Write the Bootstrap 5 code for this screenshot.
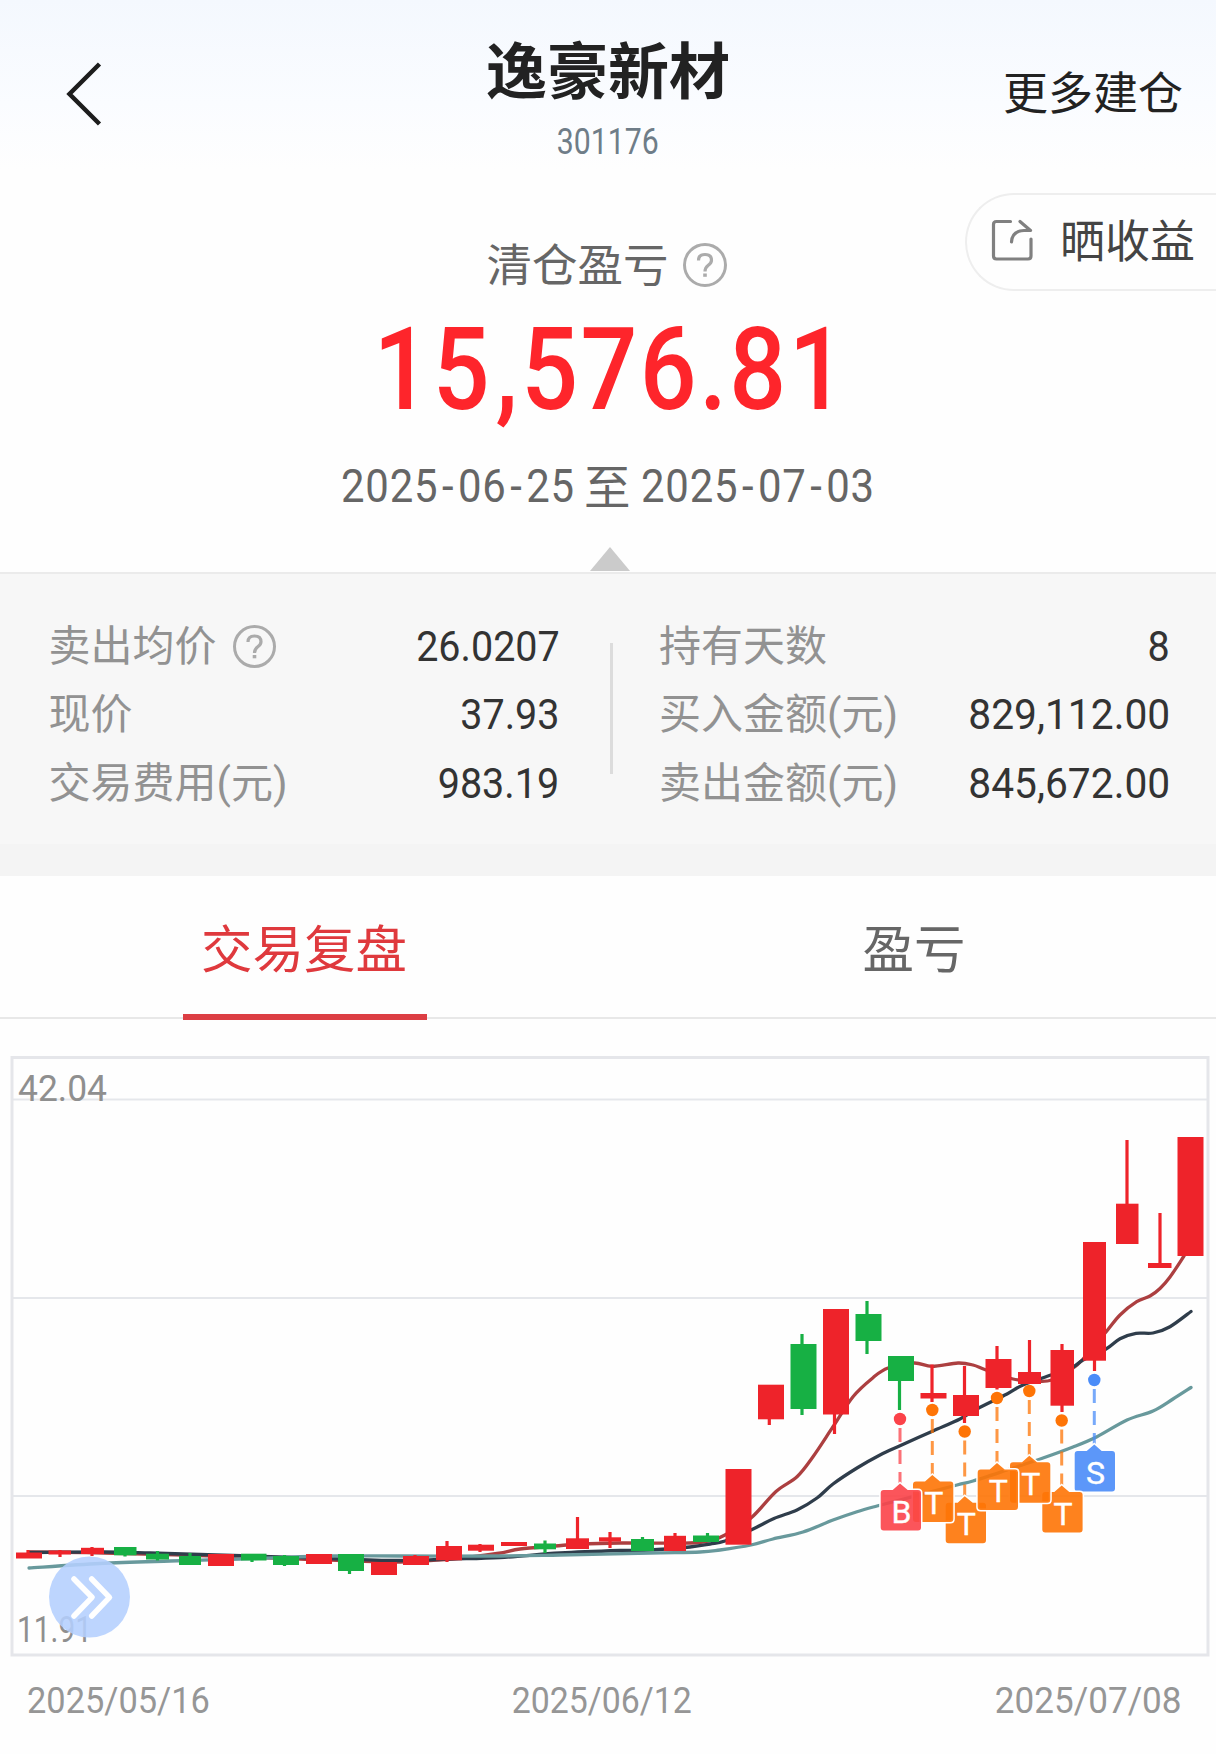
<!DOCTYPE html>
<html lang="zh-CN">
<head>
<meta charset="utf-8">
<meta name="viewport" content="width=device-width, initial-scale=1">
<title>逸豪新材 301176</title>
<link href="https://cdn.jsdelivr.net/npm/bootstrap@5.3.0/dist/css/bootstrap.min.css" rel="stylesheet">
<style>
body{font-family:Roboto,"Noto Sans CJK SC",sans-serif;color:#333;background:#fefefe;overflow-x:hidden}
.topbar{height:188px;background:linear-gradient(#f4f8fe,#fafcff 55%,#fefefe 90%)}
.topbar .back{padding-left:66px}
.stock-name{font-size:61px;line-height:70px;font-weight:700;color:#222;padding-top:37.5px}
.stock-code{font-size:36px;line-height:40px;color:#6f7d88;margin-top:14px}
.more-link{font-size:45px;line-height:60px;color:#222;padding:2px 33px 0 0}
.squeeze{display:inline-block;transform:scaleX(var(--sx,1))}
.from-end{transform-origin:right center}
.from-start{transform-origin:left center}
.summary{height:384px;padding-top:48.5px}
.share-pill{top:5px;right:-2px;width:253px;height:98px;border:2px solid #eee;border-right:0;border-radius:49px 0 0 49px;background:#fefefe;font-size:45px;line-height:60px;color:#444;padding:2px 0 0 23px;gap:26px}
.share-pill svg{margin-top:-4px}
.pl-label{font-size:45.5px;line-height:60px;color:#666;gap:14px;margin-left:-3px}
.pl-label svg{margin-top:-3px}
.pl-value{font-size:115px;line-height:110px;font-weight:500;color:#fe252b;margin-top:18.5px;padding-left:5px}
.pl-value .squeeze{letter-spacing:2.8px}
.pl-value .comma{padding:0 1px 0 4px}
.pl-range{font-size:46.5px;line-height:60px;color:#666;margin-top:31px}
.pl-range .zhi{width:45px;margin:1.5px 12px 0 9px}
.caret{width:0;height:0;border:20.5px solid transparent;border-top:0;border-bottom:24px solid #cbcbcb;margin:29.5px auto 0;position:relative;left:2px}
.stats{height:272px;background:#f7f7f7;border-top:2px solid #ebebeb;padding:38.5px 46px 0 48.5px;font-size:42px}
.stat-row{height:68.6px;line-height:60px}
.stat-row .lbl{color:#929292}
.stat-row .lbl svg{margin-top:-1px}
.stats .vline{width:2.5px;height:131px;background:#dcdcdc;margin:30px 0 0 4px}
.stat-col{width:511px}
.band{height:32px;background:#f4f4f4}
.tabs{height:143px;border-bottom:2px solid #e8e8e8;font-size:51.5px;line-height:60px;color:#666}
.tabs>div{padding-top:44.5px}
.tabs>div+div{padding-left:4px}
.tabs .on{color:#df393d}
.tabs .bar{width:244px;height:6.5px;background:#dc3e43;margin:33px auto 0;transform:translateX(1px)}
.chart{height:610px;margin-top:31px}
.axis-dates{font-size:36px;line-height:40px;color:#969696;padding:0 34px 0 27px;margin-top:21px}
svg{display:block}
</style>
</head>
<body>
<header class="topbar row g-0 align-items-center">
  <div class="col-3 back">
    <svg width="38" height="66" viewBox="0 0 38 66" fill="none" stroke="#1d1d1d" stroke-width="4.500"><path d="M33.500 3L3.500 33L33.500 63"/></svg>
  </div>
  <div class="col-6 text-center align-self-start">
    <div class="stock-name">逸豪新材</div>
    <div class="stock-code"><span class="squeeze" style="--sx:.84">301176</span></div>
  </div>
  <div class="col-3 text-end more-link text-nowrap">更多建仓</div>
</header>

<section class="summary position-relative text-center">
  <div class="share-pill position-absolute d-flex align-items-center text-nowrap">
    <svg width="44" height="44" viewBox="0 0 44 44" fill="none" stroke="#808080" stroke-width="3.200" stroke-linecap="round" stroke-linejoin="round"><path d="M20.500 2.500H6.500Q3.500 2.500 3.500 5.500V37Q3.500 40 6.500 40H38Q41 40 41 37V20M30 2.500L40.500 11.500H34Q22 12 21.500 23"/></svg>
    <span>晒收益</span>
  </div>
  <div class="pl-label d-flex justify-content-center align-items-center">
    <span>清仓盈亏</span>
    <svg width="44" height="44" viewBox="0 0 44 44" fill="none" stroke="#ababab"><circle cx="22" cy="22" r="20.500" stroke-width="3"/><path d="M15.500 17.500Q15.500 11.500 22 11.500Q28.500 11.500 28.500 17.300Q28.500 20 25 22.500Q22 24.800 22 28.500" stroke-width="3.200"/><path d="M22 30.500V33.800" stroke-width="3.600"/></svg>
  </div>
  <div class="pl-value"><span class="squeeze" style="--sx:.87">15<span class="comma">,</span>576.81</span></div>
  <div class="pl-range d-flex justify-content-center">
    <span class="squeeze from-end" style="--sx:.9;letter-spacing:.9px">2025<span class="px-1">-</span>06<span class="px-1">-</span>25</span>
    <span class="zhi">至</span>
    <span class="squeeze from-start" style="--sx:.9;letter-spacing:.9px">2025<span class="px-1">-</span>07<span class="px-1">-</span>03</span>
  </div>
  <div class="caret"></div>
</section>

<section class="stats d-flex justify-content-between">
  <div class="stat-col">
    <div class="stat-row d-flex justify-content-between align-items-center"><span class="lbl d-flex align-items-center gap-3"><span>卖出均价</span>
      <svg width="44" height="44" viewBox="0 0 44 44" fill="none" stroke="#ababab"><circle cx="21.500" cy="22.500" r="20" stroke-width="3"/><path d="M15 18Q15 12 21.500 12Q28 12 28 17.800Q28 20.500 24.500 23Q21.500 25.300 21.500 29" stroke-width="3.200"/><path d="M21.500 31V34.300" stroke-width="3.600"/></svg></span>
      <span class="squeeze from-end" style="--sx:.94">26.0207</span></div>
    <div class="stat-row d-flex justify-content-between align-items-center"><span class="lbl">现价</span><span class="squeeze from-end" style="--sx:.94">37.93</span></div>
    <div class="stat-row d-flex justify-content-between align-items-center"><span class="lbl">交易费用(元)</span><span class="squeeze from-end" style="--sx:.94">983.19</span></div>
  </div>
  <div class="vline"></div>
  <div class="stat-col">
    <div class="stat-row d-flex justify-content-between align-items-center"><span class="lbl">持有天数</span><span class="squeeze from-end" style="--sx:.94">8</span></div>
    <div class="stat-row d-flex justify-content-between align-items-center"><span class="lbl">买入金额(元)</span><span class="squeeze from-end" style="--sx:.97">829,112.00</span></div>
    <div class="stat-row d-flex justify-content-between align-items-center"><span class="lbl">卖出金额(元)</span><span class="squeeze from-end" style="--sx:.97">845,672.00</span></div>
  </div>
</section>
<div class="band"></div>

<nav class="tabs d-flex text-center">
  <div class="on w-50">交易复盘<div class="bar"></div></div>
  <div class="w-50">盈亏</div>
</nav>

<section class="chart">
  <svg id="kline" width="1216" height="610" viewBox="0 1050 1216 610" font-family="Roboto, sans-serif">
    <g stroke="#e5e7eb" stroke-width="2"><path d="M12 1099.500H1208M12 1298H1208M12 1496H1208"/></g>
    <rect x="12" y="1057.500" width="1196" height="597.500" fill="none" stroke="#e5e6ea" stroke-width="3"/>
    <g font-size="36" fill="#8f8f8f"><text x="18" y="1101" textLength="89" lengthAdjust="spacingAndGlyphs">42.04</text><text x="17" y="1642" textLength="75" lengthAdjust="spacingAndGlyphs">11.91</text></g>
    <g id="lines" fill="none" stroke-width="3.300" stroke-linecap="round"></g>
    <g id="candles"></g>
    <g id="marks"></g>
    <circle cx="89.500" cy="1597" r="40.500" fill="#b4cffe" fill-opacity=".88"/>
    <path d="M74 1579L92 1597.300L74 1616M91.700 1579L109.500 1597.300L91.700 1616" fill="none" stroke="#fff" stroke-width="5.500" stroke-linecap="round" stroke-linejoin="round"/>
  </svg>
</section>
<footer class="axis-dates d-flex justify-content-between">
  <span class="squeeze from-start" style="--sx:.955">2025/05/16</span>
  <span class="squeeze" style="--sx:.94;margin-left:-6px">2025/06/12</span>
  <span class="squeeze from-end" style="--sx:.975">2025/07/08</span>
</footer>

<script src="https://cdn.jsdelivr.net/npm/bootstrap@5.3.0/dist/js/bootstrap.bundle.min.js"></script>
<script>
// Smooth curve through points (Catmull-Rom converted to cubic segments)
function curve(p){
  let d='M'+p[0];
  for(let i=0;i<p.length-1;i++){
    const a=p[i-1]||p[i],b=p[i],c=p[i+1],e=p[i+2]||c;
    d+=`C${b[0]+(c[0]-a[0])/6} ${b[1]+(c[1]-a[1])/6} ${c[0]-(e[0]-b[0])/6} ${c[1]-(e[1]-b[1])/6} ${c[0]} ${c[1]}`;
  }
  return d;
}
const teal=[[29,1568],[100,1563.5],[170,1561],[240,1559],[330,1556],[400,1556],[500,1556],[560,1555],[650,1553],[700,1552],[720,1550],[751,1545],[773,1539],[803,1532],[833,1520],[857,1511.7],[877,1506],[915,1496],[957,1485],[973,1481],[1007,1470],[1043,1458],[1073,1447],[1097,1436.7],[1127,1420],[1153,1411],[1173,1399],[1191,1387.5]];
const dark=[[29,1552.5],[104,1552],[150,1553],[200,1554.5],[250,1556],[330,1558.5],[400,1560.5],[450,1559],[500,1557.5],[560,1553],[620,1550.5],[650,1550],[690,1547],[710,1544],[725,1541],[751,1530],[774,1518.5],[797,1510],[817,1498],[833,1484],[857,1468],[880,1455],[900,1445.7],[933,1431],[960,1419],[977,1409],[1007,1394],[1023,1385],[1051,1375],[1073,1367],[1083,1360],[1106,1349],[1120,1338.7],[1136,1333.3],[1153,1333],[1170,1326.7],[1191,1311.5]];
const red=[[29,1552],[104,1553],[200,1555.5],[300,1559],[400,1562],[450,1559],[497,1553.5],[520,1549],[555,1546],[580,1544],[620,1543],[690,1543],[712,1540],[725,1535],[751,1518],[776,1491.5],[797,1476.7],[813,1456.7],[833,1426.7],[853,1396.7],[873,1377.7],[888,1368],[914,1363],[932,1366.3],[958,1363],[973,1365],[986,1370],[1013,1379],[1034,1381],[1052,1380],[1073,1368],[1083,1359],[1106,1332],[1120,1315],[1136.7,1301.7],[1150,1296],[1160,1288.5],[1170,1277],[1184,1256]];
document.getElementById('lines').innerHTML=[[red,'#ac3f40'],[dark,'#2f3d4b'],[teal,'#68999c']].map(l=>`<path d="${curve(l[0])}" stroke="${l[1]}"/>`).join('');

// colour, left, right, body top, body bottom, wick x, wick top, wick bottom
const R='#ee232a',G='#17b044';
const candles=[
[R,16,42,1552.5,1558.5,28,1550,1558],[R,48.5,71,1550.5,1554.5,60,1550,1557],[R,81,104,1547.8,1554,92,1547,1556],[G,114,136.5,1547,1555.3,125,1547,1556.5],
[G,146,169,1553.7,1559.5,157.5,1551,1560.5],[G,179,201,1556,1565,190,1553,1565],[R,208,234,1554,1566,221,1554,1566],[G,241,266.5,1553.7,1560.5,252,1554,1562],
[G,273,299,1556,1565,284.5,1555,1566],[R,306,332,1554,1564,319,1554,1564],[G,338,364,1554,1571,349.5,1554,1574],[R,371,397,1562,1575,383,1562,1575],
[R,403,429,1556,1565,415,1555,1565],[R,436,462,1546,1560.3,447,1541,1562],[R,468,494,1544.7,1550.7,480,1544,1552],[R,501,527,1542,1546,512,1542,1546],
[G,534,556,1543.5,1549.3,545,1540.5,1553],[R,566,589,1538.3,1549,577.5,1517,1549],[R,599,621,1537.3,1541.5,610,1532,1548],[G,631,654,1539,1551,642.5,1537,1551],
[R,664,686,1535.8,1551,675,1533,1551],[G,693,719,1535.5,1542,707.5,1533,1542],[R,725.5,751.5,1469,1544.7,738,1469,1544],[R,758,784,1384.7,1419.3,769.3,1385,1425],
[G,790.5,816.5,1344,1409,802,1334,1415],[R,823,849,1309,1414.5,834.5,1310,1434],[G,855.5,881.5,1314,1341,867,1301,1354],[G,888,914,1356,1381,899.5,1356,1410],
[R,920.5,946.5,1393,1398.5,932,1364.5,1402],[R,953,979,1395,1416,964.5,1366,1423],[R,985.5,1011.5,1359,1388,997,1346,1389.5],[R,1018,1041,1372,1384,1029.5,1340,1384],
[R,1050.5,1074,1350,1405.7,1062,1344,1412],[R,1083,1106,1242,1360.7,1094.5,1242,1371],[R,1116,1138.500,1203.7,1244,1127,1140,1244],[R,1148,1171.5,1263,1268,1160,1213,1268],
[R,1177.5,1203.5,1137,1256,1190,1137,1256]];
document.getElementById('candles').innerHTML=candles.map(c=>`<g fill="${c[0]}"><rect x="${c[5]-1.6}" y="${c[6]}" width="3.2" height="${c[7]-c[6]}"/><rect x="${c[1]}" y="${c[3]}" width="${c[2]-c[1]}" height="${c[4]-c[3]}"/></g>`).join('');

// letter, badge left, badge top, dot x, dot y, colour
const marks=[['S',1074.7,1451,1094.3,1380,'#4a8cf8'],['T',1042.3,1492,1061.7,1420.5,'#fe7406'],['T',1010,1462.3,1029.3,1391,'#fe7406'],['T',945.7,1502.7,964.7,1431.5,'#fe7406'],['T',977.7,1469.5,997,1398,'#fe7406'],['T',913,1481.5,932.3,1410,'#fe7406'],['B',880.7,1490,900,1419,'#fb4249']];
document.getElementById('marks').innerHTML=marks.map(([t,x,y,dx,dy,k])=>`
<path d="M${dx} ${dy+9}V${y-6}" stroke="${k}" stroke-opacity=".75" stroke-width="3" stroke-dasharray="14 8"/>
<circle cx="${dx}" cy="${dy}" r="6.200" fill="${k}"/>
<path d="M${x+3} ${y}H${x+12}L${dx} ${y-6.5}L${x+27} ${y}H${x+37.3}Q${x+40.3} ${y} ${x+40.3} ${y+3}V${y+37.5}Q${x+40.3} ${y+40.5} ${x+37.3} ${y+40.5}H${x+3}Q${x} ${y+40.5} ${x} ${y+37.5}V${y+3}Q${x} ${y} ${x+3} ${y}Z" fill="${k}" fill-opacity=".9" stroke="#fff" stroke-width="3" paint-order="stroke"/>
<text x="${x+20.7}" y="${y+32.5}" font-size="32" fill="#fff" stroke="#fff" stroke-width=".4" text-anchor="middle">${t}</text>`).join('');
</script>
</body>
</html>
